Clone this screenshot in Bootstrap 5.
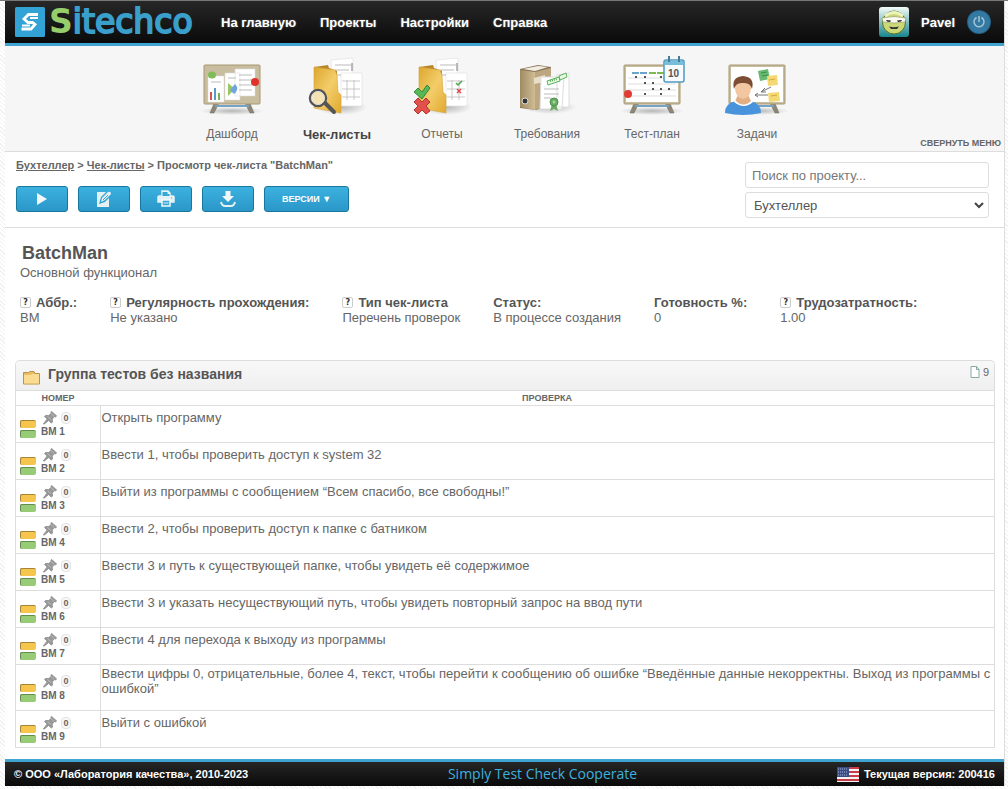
<!DOCTYPE html>
<html lang="ru">
<head>
<meta charset="utf-8">
<meta name="viewport" content="width=device-width, initial-scale=1">
<title>Sitechco – BatchMan</title>
<link href="https://cdn.jsdelivr.net/npm/bootstrap@5.3.0/dist/css/bootstrap.min.css" rel="stylesheet">
<style>
body{font:13px/15px "Liberation Sans",Arial,sans-serif;color:#666;background:#fff repeating-linear-gradient(45deg,#f1f1f1 0 1px,#fff 1px 3px);border-top:1px solid #777;padding:0 3px 3px 5px}
.shell{background:#fff;border-right:1px solid #ddd}
.topbar{background:linear-gradient(#272727,#0a0a0a);border-bottom:3px solid #3fa5d0;height:45px;padding:0 13px 0 10px}
.topbar a{color:#fff;text-decoration:none;font-weight:bold;text-shadow:0 0 2px #666}
.wordmark{font:33px/42px "DejaVu Sans",sans-serif;color:#3a9fcb;-webkit-text-stroke:2px #3a9fcb}
.wordmark span{font-weight:bold;color:#97ce6c;-webkit-text-stroke:0}
.topbar a.brand{font-weight:normal;text-shadow:none;width:177px}
.mainlinks{gap:24px;margin-left:29px}
.sections{background:#f6f6f6;border-bottom:1px solid #ddd;height:106px}
.sections ul{padding-right:20px}
.sections li{width:105px}
.sections li a{color:#666;text-decoration:none;font-size:12px;display:block;text-align:center;padding-top:9px}
.sections li svg{display:block;margin:0 auto 8px;overflow:visible}
.sections li a.current{color:#444;font-weight:bold;font-size:13px}
.spread{flex:1 1 0}
.collapse-link{font-size:9px;line-height:12px;font-weight:bold;color:#666;text-decoration:none;padding:0 3px 2px 0;white-space:nowrap}
.tools{border-bottom:1px solid #ddd;padding:6px 15px 8px 11px;min-height:76px;margin-bottom:1px}
.crumbs{font-size:11px;font-weight:bold;margin-bottom:13px}
.crumbs a{color:#666}
.toolrow{gap:10px}
.btn-tool{width:52px;height:26px;padding:0;border:1px solid #17779c;border-radius:3px;background:linear-gradient(#3cb1df,#2a97c8);color:#fff;font-size:9px;line-height:14px;font-weight:bold;display:flex;align-items:center;justify-content:center}
.btn-tool.wide{width:85px}
.btn-tool:hover{background:#2a97c8;color:#fff}
.finder{width:244px;padding-top:4px}
.finder .form-control,.finder .form-select{font-size:13px;line-height:15px;border:1px solid #ddd;border-radius:3px;color:#555;height:26px;padding:0 6px}
.finder .form-control::placeholder{color:#777}
.finder .form-select{padding:0 24px 0 8px;background-position:right 4px center;background-size:10px 10px;background-image:url("data:image/svg+xml,%3Csvg xmlns='http://www.w3.org/2000/svg' viewBox='0 0 10 10'%3E%3Cpath d='M1 3l4 4 4-4' fill='none' stroke='%23444' stroke-width='2'/%3E%3C/svg%3E")}
.work{padding:13px 9px 11px 10px}
h1{font-size:18px;line-height:22px;font-weight:bold;color:#555;margin:0 0 1px 7px}
.subtitle{padding-left:5px}
.facts{gap:16px 33px;margin:15px 5px 35px}
.facts dt{color:#555;line-height:15px}
.facts dd{margin:0}
.hint{display:inline-block;width:11px;height:11px;border:1px solid #ccc;border-radius:2px;font:bold 8px/9px "DejaVu Sans",sans-serif;color:#333;text-align:center;vertical-align:2px;margin-right:5px}
.group{border:1px solid #ddd;border-bottom:0;border-radius:5px 5px 0 0}
.group-head{background:linear-gradient(#f8f8f8,#efefef);height:29px;border-radius:5px 5px 0 0;padding:0 5px 0 7px}
.group-head h2{font-size:14px;line-height:16px;font-weight:bold;color:#555;margin:0 0 3px 8px}
.group-head .total{font-size:11px;line-height:14px;gap:3px;margin-bottom:8px}
.checks{margin:0;color:#666;border-color:#ddd;table-layout:fixed}
.checks>:not(caption)>*>*{padding:0;border:0 solid #ddd;color:#666;background:none}
.checks>thead>tr>th{font-size:9px;line-height:14px;height:15px;text-align:center;border-top-width:1px}
.checks>tbody>tr>td{border-top-width:1px;height:37px;vertical-align:top}
.checks>tbody>tr>td.num{border-right-width:1px;vertical-align:middle}
.checks>tbody>tr>td.txt{padding:4px 0 0 1px}
.checks>tbody>tr.long>td{height:46px}
.checks>tbody>tr.long>td.txt{padding-top:1px}
.checks>tbody>tr:last-child>td{border-bottom-width:1px}
.first-col{width:84px}
.cell{height:30px;padding-left:4px;gap:5px}
.code{font-size:10px;line-height:12px;font-weight:bold;white-space:nowrap}
.pinrow{height:17px;gap:4px;padding-left:2px}
.count{width:10px;height:12px;border:1px solid #e3e3e3;border-radius:4px;background:#f8f8f8;font-size:9px;line-height:10px;text-align:center;font-weight:bold}
.states{padding-top:11px}
.states i{display:block;width:16px;height:8px;border-radius:2px;border:1px solid;border-width:1px 0 0 1px;background:#f6c54d;border-color:#a68437;margin-bottom:2px}
.states i+i{background:#98cb76;border-color:#648c52;margin:0}
.foot{background:linear-gradient(#262626,#0a0a0a);border-top:3px solid #3fa5d0;height:27px;color:#fff;font-size:11px;line-height:14px;font-weight:bold;padding:0 9px}
.slogan{font:14px/18px "Open Sans",sans-serif;color:#3fb0de;text-decoration:none}
.foot .version{gap:5px}
</style>
</head>
<body>
<svg width="0" height="0" class="position-absolute" aria-hidden="true">
<defs>
<linearGradient id="gold" x1="0" x2="1" y2="1"><stop stop-color="#dda72e"/><stop offset=".5" stop-color="#f3cd6a"/><stop offset="1" stop-color="#e1a92d"/></linearGradient>
<linearGradient id="tan" x1="0" x2="1"><stop stop-color="#a08a62"/><stop offset="1" stop-color="#d0bd95"/></linearGradient>
<linearGradient id="teal" x2="0" y2="1"><stop stop-color="#f4fbf8"/><stop offset="1" stop-color="#17838b"/></linearGradient>
<radialGradient id="soft"><stop stop-color="#777" stop-opacity=".5"/><stop offset="1" stop-color="#777" stop-opacity="0"/></radialGradient>
<symbol id="board" viewBox="0 0 64 62"><ellipse cx="32" cy="55" rx="32" ry="4" fill="url(#soft)"/><path d="M15 45l-5 12h4l6-12M49 45l5 12h-4l-6-12" fill="#8c8676" stroke="#6e6858" stroke-width=".5"/><path d="M15 50h34" stroke="#77a2c2" stroke-width="2"/><rect x="4" y="9" width="56" height="39" rx="1" fill="#c9bda0" stroke="#a79873"/></symbol>
<symbol id="papers" viewBox="0 0 64 62"><ellipse cx="36" cy="51" rx="26" ry="8" fill="url(#soft)"/><path d="M26 4l22-2v47H28z" fill="#fff" stroke="#ddd" stroke-width=".6"/><path d="M36 17h21v33H36z" fill="#fff" stroke="#ddd" stroke-width=".6"/><path d="M30 9h16M30 14h14M32 19h4" stroke="#bbb"/><path d="M37 25h18M37 33h18M37 41h18M42 24v20M49 24v20" stroke="#bbb" stroke-width=".8"/><path d="M47 7v8" stroke="#777"/></symbol>
<symbol id="folder" viewBox="0 0 64 62"><path d="M9 11l14-2 1 3 8 3v40l-22-3z" fill="#b9872b"/><path d="M9 11l21 3 2 5 1 17 3 3v18L9 52z" fill="url(#gold)" stroke="#d4a23a" stroke-width=".6"/></symbol>
<symbol id="pin" viewBox="0 0 14 14"><path d="M8.600.500l5 4.400-1.200 1-1-.3-2.200 2.500.3 3-1.300 1-2.500-2.700L1 13.200l-.6-.3 3.800-5L1.500 5.600l1.100-1.200 3 .2L8.300 2.300 7.900 1z" fill="#999" stroke="#888" stroke-width=".8"/><path d="M8 2.600l3 2.700M4.500 5.500l3.500 3" stroke="#bbb"/></symbol>
</defs>
</svg>
<div class="shell">
<header class="topbar d-flex align-items-center">
<a href="#" class="brand d-flex align-items-center gap-1">
<svg width="30" height="30" viewBox="0 0 30 30" class="flex-shrink-0" aria-hidden="true"><rect width="30" height="30" rx="1.500" fill="#33a2d5"/><path d="M23 7.500H13.500L9 12l4 3.500h4.500l2.500 2-4 4.500H6.500" fill="none" stroke="#fff" stroke-width="2.800"/><path d="M7 18.500h8M15 11h8" stroke="#fff" stroke-width="2"/></svg>
<span class="wordmark"><span>S</span>itechco</span></a>
<nav class="mainlinks d-flex" aria-label="Главное меню"><a href="#">На главную</a><a href="#">Проекты</a><a href="#">Настройки</a><a href="#">Справка</a></nav>
<div class="d-flex align-items-center ms-auto">
<svg width="30" height="30" viewBox="0 0 30 30" aria-hidden="true"><rect width="30" height="30" rx="3" fill="url(#teal)"/><circle cx="15" cy="15.500" r="11.500" fill="#cbd878" stroke="#58742b"/><path d="M6 9q9-7 18 0" stroke="#edf3c0" stroke-width="3" fill="none"/><path d="M3 11q12-3 24 0l-1 4q-11 2-22 0z" fill="#fafaf2" stroke="#899250" stroke-width=".6"/><path d="M7 13l5 .5-1 1.500-3-.4zM23 13l-5 .5 1 1.500 3-.4z" fill="#222"/><path d="M10 19.500q5 1.500 10 0l-2 2.500h-6z" fill="#333"/></svg>
<a href="#" class="ms-2 ps-1 me-2">Pavel</a>
<a href="#" aria-label="Выход" class="ms-1"><svg class="d-block" width="24" height="24" viewBox="0 0 24 24"><circle cx="12" cy="12" r="12" fill="#245f83"/><circle cx="12" cy="12" r="11" fill="#3479a1"/><path d="M9.500 7.500a5 5 0 1 0 5 0M12 6v6" fill="none" stroke="#a5c5d6" stroke-width="1.500"/></svg></a>
</div>
</header>
<nav class="sections d-flex" aria-label="Разделы">
<div class="spread"></div>
<ul class="list-unstyled d-flex m-0">
<li><a href="#"><svg width="64" height="64" viewBox="0 0 64 62"><use href="#board"/><path d="M35 13h20v27H35zM25 17h15v27H25zM8 20h16v26H8z" fill="#fff" stroke="#ddd" stroke-width=".6"/><path d="M39 19h13M39 24h13M39 29h13M39 34h13M11 26h10M28 22h8" stroke="#bbb"/><path d="M11 36v8" stroke="#d35353" stroke-width="2"/><path d="M15 32v12" stroke="#5a9bc6" stroke-width="2"/><path d="M19 37v7" stroke="#73b554" stroke-width="2"/><path d="M28 27v13l7-7z" fill="#99c967"/><path d="M35 28q5 5-1 10l-4-4z" fill="#71a5dc"/><ellipse cx="12" cy="19" rx="4" ry="3.500" fill="#7cbd58"/><circle cx="55" cy="26" r="4" fill="#df322c"/></svg>Дашборд</a></li>
<li><a href="#" class="current"><svg width="64" height="64" viewBox="0 0 64 62"><use href="#papers"/><use href="#folder"/><path d="M20 47l9 9" stroke="#555" stroke-width="4" stroke-linecap="round"/><circle cx="13" cy="42" r="8" fill="#f5e8c2" fill-opacity=".85" stroke="#555" stroke-width="2.500"/><circle cx="13" cy="42" r="6.500" fill="none" stroke="#ddd"/></svg>Чек-листы</a></li>
<li><a href="#"><svg width="64" height="64" viewBox="0 0 64 62"><use href="#papers"/><use href="#folder"/><path d="M4 36l4-4 4 4 5-7 3 3-8 11z" fill="#57b956" stroke="#338a38"/><path d="M4 46l4-4 4 4 4-4 4 4-4 4 4 5-4 3-4-4-4 4-4-4 4-4z" fill="#e2524b" stroke="#b53431"/><path d="M46 27l2 2 4-4" stroke="#45a947" stroke-width="1.500" fill="none"/><path d="M47 33l4 4m0-4l-4 4" stroke="#db4949" stroke-width="1.500"/></svg>Отчеты</a></li>
<li><a href="#"><svg width="64" height="64" viewBox="0 0 64 62"><ellipse cx="34" cy="51" rx="27" ry="7" fill="url(#soft)"/><path d="M5 13l18-4 13 2v38L21 54 5 52z" fill="#8b7757"/><path d="M8 13l15-3 10 1-13 4z" fill="#f2eee4"/><path d="M5 14l15 2v38L5 51z" fill="url(#tan)"/><path d="M20 16l16-4v36l-16 6z" fill="#bda780"/><path d="M19 22l11-3v7l-11 2z" fill="#e8dfc9"/><circle cx="10" cy="45" r="3" fill="#333" stroke="#ddd"/><path d="M42 19l12-2v34H42zM26 21h23l-2 32H25z" fill="#fff" stroke="#ddd"/><path d="M29 33h15M29 38h15M29 42h7" stroke="#bbb"/><path d="M32 25l12-4 1 4-12 4zM44 20l7-3 1 4-7 3z" fill="#e8f7e2" stroke="#5cb25f"/><path d="M35 25l7-2" stroke="#5cb25f" stroke-dasharray="1 1" stroke-width="2"/><path d="M37 48l-2 7 4-2 4 2-2-7" fill="#6cab63"/><circle cx="39" cy="46" r="4" fill="#67ad63" stroke="#4b8f4b"/><circle cx="39" cy="46" r="1.500" fill="#a6d49c"/></svg>Требования</a></li>
<li><a href="#"><svg width="64" height="64" viewBox="0 0 64 62"><use href="#board"/><path d="M4 11h54v35H6V11z" fill="#fff"/><path d="M8 22h48M8 28h48M8 34h48M8 40h48" stroke="#ddd"/><path d="M12 17h15" stroke="#6aa5cc" stroke-width="2" stroke-dasharray="7 1"/><path d="M29 17h15" stroke="#80b952" stroke-width="2" stroke-dasharray="7 1"/><path d="M15 21h2m7 0h2m14 0h2M24 27h2m6 0h2M32 33h2m6 0h2m6 0h2M24 38h2m14 0h2" stroke="#555" stroke-width="2"/><circle cx="8" cy="38" r="4" fill="#e13b35"/><rect x="44" y="4" width="20" height="22" rx="2" fill="#f7fbfd" stroke="#4d9cbf" stroke-width="1.500"/><path d="M45 5h18v4H45z" fill="#76bed9"/><path d="M49 0v6m10-6v6" stroke="#477b98" stroke-width="2"/><text x="48" y="21" font-family="Liberation Sans" font-size="10" font-weight="bold" fill="#555">10</text></svg>Тест-план</a></li>
<li><a href="#"><svg width="64" height="64" viewBox="0 0 64 62"><use href="#board"/><path d="M6 11h52v35H6z" fill="#fff"/><path d="M33 15l10-2 2 10-10 2z" fill="#68ba72"/><path d="M42 20l10-1 1 10-10 1zM43 37l11-1 1 9-11 1z" fill="#f4d873"/><path d="M36 17l6-1m-5 4l6-1" stroke="#3c9149"/><path d="M44 24l6-1M46 40l6-1" stroke="#d4a93f"/><path d="M46 31l-10 5m4-4l-4 4 5 0M43 39H30m3-2l-3 2 3 2" stroke="#777" fill="none"/><path d="M0 57q0-10 11-12h14q11 2 11 12-18 4-36 0z" fill="#4793dc"/><path d="M10 45q8 8 16 0l-3-6H13z" fill="#e2ae84"/><path d="M10 44q8 9 17 0l1 2q-9 8-19 0z" fill="#fff"/><ellipse cx="18" cy="32" rx="8" ry="11" fill="#f2c6a0"/><path d="M9 33q-3-12 9-13 12 1 9 13-2-7-9-6-7-1-9 6z" fill="#7c4d32"/></svg>Задачи</a></li>
</ul>
<div class="spread d-flex justify-content-end align-items-end"><a href="#" class="collapse-link">СВЕРНУТЬ МЕНЮ</a></div>
</nav>
<section class="tools d-flex justify-content-between">
<div>
<div class="crumbs"><a href="#">Бухтеллер</a> &gt; <a href="#">Чек-листы</a> &gt; Просмотр чек-листа "BatchMan"</div>
<div class="toolrow d-flex">
<button class="btn btn-tool" type="button" aria-label="Запустить"><svg width="12" height="12"><path d="M1 0l10 6-10 6z" fill="#f2f8fa"/></svg></button>
<button class="btn btn-tool" type="button" aria-label="Редактировать"><svg width="16" height="18" viewBox="0 0 16 18"><path d="M1 2h9L5 7 3 14l6-2 4-4v9H1z" fill="#e6f1f5"/><path d="M5 12l1-4 6-6q3-1 3 2l-6 6z" fill="#e6f1f5"/><path d="M7 10l5-5" stroke="#36a8d7"/></svg></button>
<button class="btn btn-tool" type="button" aria-label="Печать"><svg width="18" height="18" viewBox="0 0 18 18"><path d="M5 6V1h6l2 2v3M5 12H1V7q0-1 1-1h14q1 0 1 1v5h-4" fill="#e6f1f5" fill-rule="evenodd" stroke="#e6f1f5" stroke-width="1.500"/><path d="M5.500 2h5v2h2v2h-7z" fill="#36a8d7"/><path d="M5 10h8v6H5z" fill="#36a8d7" stroke="#f1f8fa" stroke-width="1.500"/><path d="M6.500 13h5" stroke="#e6f1f5"/><path d="M14 8h1" stroke="#36a8d7"/></svg></button>
<button class="btn btn-tool" type="button" aria-label="Скачать"><svg width="16" height="18" viewBox="0 0 16 18"><path d="M5.500 1h5v5H14l-6 6-6-6h3.500z" fill="#f1f8fa"/><path d="M1 12q1 4 4 4h6q3 0 4-4" fill="none" stroke="#e6f1f5" stroke-width="2"/></svg></button>
<button class="btn btn-tool wide" type="button">ВЕРСИИ ▼</button>
</div>
</div>
<form class="finder d-flex flex-column gap-1">
<input class="form-control" type="search" placeholder="Поиск по проекту..." aria-label="Поиск по проекту">
<select class="form-select" aria-label="Проект"><option>Бухтеллер</option></select>
</form>
</section>
<main class="work">
<h1>BatchMan</h1>
<div class="subtitle">Основной функционал</div>
<dl class="facts d-flex flex-wrap">
<div><dt><span class="hint">?</span>Аббр.:</dt><dd>BM</dd></div>
<div><dt><span class="hint">?</span>Регулярность прохождения:</dt><dd>Не указано</dd></div>
<div><dt><span class="hint">?</span>Тип чек-листа</dt><dd>Перечень проверок</dd></div>
<div><dt>Статус:</dt><dd>В процессе создания</dd></div>
<div><dt>Готовность %:</dt><dd>0</dd></div>
<div><dt><span class="hint">?</span>Трудозатратность:</dt><dd>1.00</dd></div>
</dl>
<section class="group">
<div class="group-head d-flex align-items-center">
<svg width="17" height="15" viewBox="0 0 17 15" class="mt-1" aria-hidden="true"><path d="M.500 14V2.500h5l1-1H11l1 2h4.500V14z" fill="#e9bd64" stroke="#bc9246"/><path d="M1 5h7l1-1h7v9.500H1z" fill="#f9dc91"/></svg>
<h2>Группа тестов без названия</h2>
<span class="total d-flex align-items-center ms-auto"><svg width="10" height="12" viewBox="0 0 10 12" aria-hidden="true"><path d="M1 .500h5.500L9 3.500v8H1z" fill="#fff" stroke="#8aa8a8"/><path d="M6.500.500v3H9" fill="none" stroke="#8aa8a8"/></svg>9</span>
</div>
<table class="table checks">
<colgroup><col class="first-col"><col></colgroup>
<thead><tr><th>НОМЕР</th><th>ПРОВЕРКА</th></tr></thead>
<tbody>
<tr><td class="num"><div class="cell d-flex"><div class="states"><i></i><i></i></div><div><div class="pinrow d-flex align-items-center"><svg width="14" height="14"><use href="#pin"/></svg><span class="count">0</span></div><div class="code">BM 1</div></div></div></td><td class="txt">Открыть программу</td></tr>
<tr><td class="num"><div class="cell d-flex"><div class="states"><i></i><i></i></div><div><div class="pinrow d-flex align-items-center"><svg width="14" height="14"><use href="#pin"/></svg><span class="count">0</span></div><div class="code">BM 2</div></div></div></td><td class="txt">Ввести 1, чтобы проверить доступ к system 32</td></tr>
<tr><td class="num"><div class="cell d-flex"><div class="states"><i></i><i></i></div><div><div class="pinrow d-flex align-items-center"><svg width="14" height="14"><use href="#pin"/></svg><span class="count">0</span></div><div class="code">BM 3</div></div></div></td><td class="txt">Выйти из программы с сообщением “Всем спасибо, все свободны!”</td></tr>
<tr><td class="num"><div class="cell d-flex"><div class="states"><i></i><i></i></div><div><div class="pinrow d-flex align-items-center"><svg width="14" height="14"><use href="#pin"/></svg><span class="count">0</span></div><div class="code">BM 4</div></div></div></td><td class="txt">Ввести 2, чтобы проверить доступ к папке с батником</td></tr>
<tr><td class="num"><div class="cell d-flex"><div class="states"><i></i><i></i></div><div><div class="pinrow d-flex align-items-center"><svg width="14" height="14"><use href="#pin"/></svg><span class="count">0</span></div><div class="code">BM 5</div></div></div></td><td class="txt">Ввести 3 и путь к существующей папке, чтобы увидеть её содержимое</td></tr>
<tr><td class="num"><div class="cell d-flex"><div class="states"><i></i><i></i></div><div><div class="pinrow d-flex align-items-center"><svg width="14" height="14"><use href="#pin"/></svg><span class="count">0</span></div><div class="code">BM 6</div></div></div></td><td class="txt">Ввести 3 и указать несуществующий путь, чтобы увидеть повторный запрос на ввод пути</td></tr>
<tr><td class="num"><div class="cell d-flex"><div class="states"><i></i><i></i></div><div><div class="pinrow d-flex align-items-center"><svg width="14" height="14"><use href="#pin"/></svg><span class="count">0</span></div><div class="code">BM 7</div></div></div></td><td class="txt">Ввести 4 для перехода к выходу из программы</td></tr>
<tr class="long"><td class="num"><div class="cell d-flex"><div class="states"><i></i><i></i></div><div><div class="pinrow d-flex align-items-center"><svg width="14" height="14"><use href="#pin"/></svg><span class="count">0</span></div><div class="code">BM 8</div></div></div></td><td class="txt">Ввести цифры 0, отрицательные, более 4, текст, чтобы перейти к сообщению об ошибке “Введённые данные некорректны. Выход из программы с ошибкой”</td></tr>
<tr><td class="num"><div class="cell d-flex"><div class="states"><i></i><i></i></div><div><div class="pinrow d-flex align-items-center"><svg width="14" height="14"><use href="#pin"/></svg><span class="count">0</span></div><div class="code">BM 9</div></div></div></td><td class="txt">Выйти с ошибкой</td></tr>
</tbody>
</table>
</section>
</main>
<footer class="foot d-flex align-items-center justify-content-between">
<div>© ООО «Лаборатория качества», 2010-2023</div>
<a href="#" class="slogan">Simply Test Check Cooperate</a>
<div class="version d-flex align-items-center"><svg width="22" height="15" viewBox="0 0 22 15" aria-hidden="true"><path d="M0 0h22v15H0z" fill="#f5f2f2"/><path d="M0 1h22M0 5h22M0 9h22M0 13h22" stroke="#c63d48" stroke-width="2"/><path d="M0 0h12v10H0z" fill="#374b86"/><path d="M1 2h10M1 5h10M1 8h10" stroke="#a9b2d2" stroke-dasharray="1 1"/></svg>Текущая версия: 200416</div>
</footer>
</div>
<script src="https://cdn.jsdelivr.net/npm/bootstrap@5.3.0/dist/js/bootstrap.bundle.min.js"></script>
</body>
</html>
